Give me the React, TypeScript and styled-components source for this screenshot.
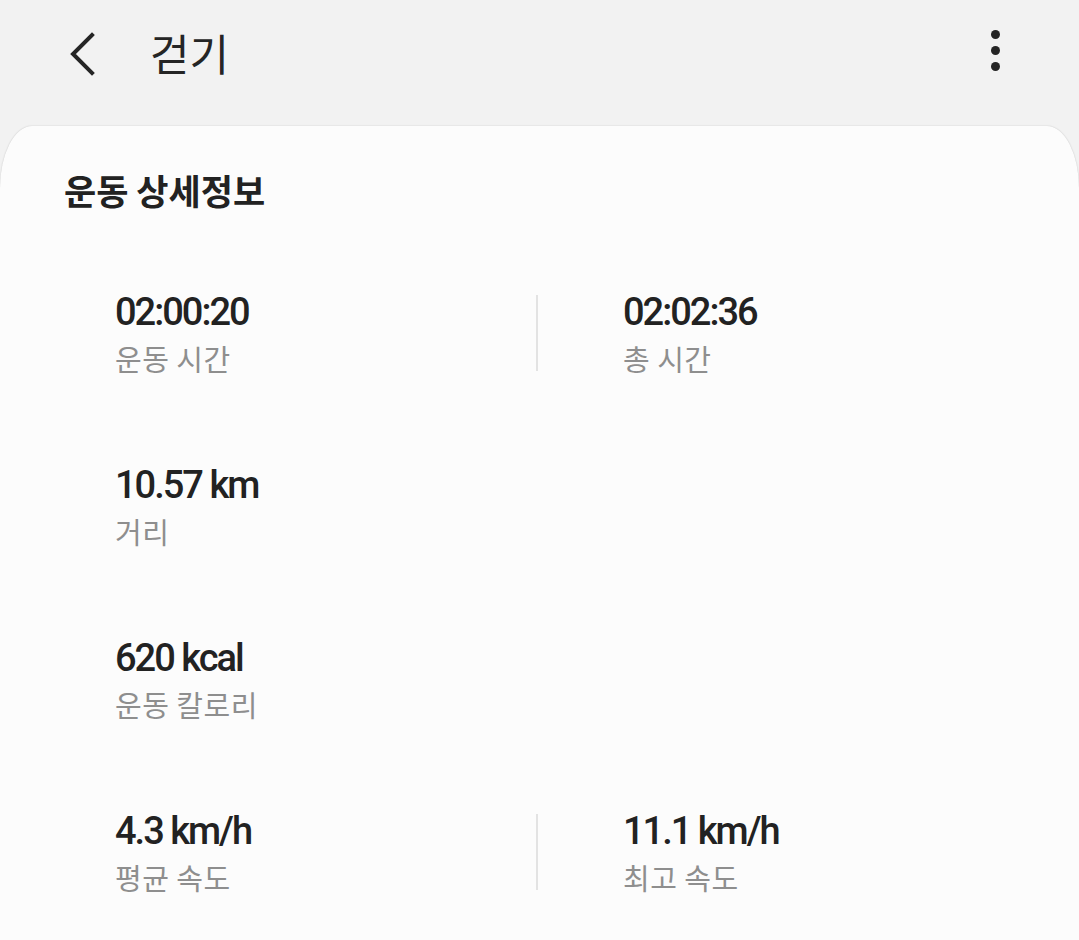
import styled, { createGlobalStyle } from "styled-components";

const GlobalStyle = createGlobalStyle`
  html, body {
    margin: 0;
    padding: 0;
    background: #f2f2f2;
  }
  body {
    font-family: "Noto Sans CJK KR", Roboto, sans-serif;
    overflow: hidden;
  }
`;

type Stat = { value: string; label: string };

// 운동 기록 한 줄에 1~2개
const rows: Stat[][] = [
  [
    { value: "02:00:20", label: "운동 시간" },
    { value: "02:02:36", label: "총 시간" },
  ],
  [{ value: "10.57 km", label: "거리" }],
  [{ value: "620 kcal", label: "운동 칼로리" }],
  [
    { value: "4.3 km/h", label: "평균 속도" },
    { value: "11.1 km/h", label: "최고 속도" },
  ],
];

export default function App() {
  return (
    <Page>
      <GlobalStyle />
      <Header>
        <BackButton aria-label="back">
          <svg width="30" height="46" viewBox="0 0 30 46">
            <polyline
              points="26,3 7,22 26,41"
              fill="none"
              stroke="#252525"
              strokeWidth="4"
              strokeLinecap="square"
              strokeLinejoin="miter"
            />
          </svg>
        </BackButton>
        <Title>걷기</Title>
        <MoreButton aria-label="more">
          <Dot />
          <Dot />
          <Dot />
        </MoreButton>
      </Header>

      <Card>
        <Heading>운동 상세정보</Heading>
        <StatList>
          {rows.map((row, i) => (
            <StatRow key={i}>
              <StatCell>
                <Value>{row[0].value}</Value>
                <Label>{row[0].label}</Label>
              </StatCell>
              {row[1] && (
                <>
                  <Divider />
                  <StatCell>
                    <Value>{row[1].value}</Value>
                    <Label>{row[1].label}</Label>
                  </StatCell>
                </>
              )}
            </StatRow>
          ))}
        </StatList>
      </Card>
    </Page>
  );
}

const Page = styled.div`
  display: flex;
  flex-direction: column;
  width: 1079px;
  height: 940px;
  background: #f2f2f2;
`;

const Header = styled.header`
  display: flex;
  align-items: center;
  height: 126px;
  padding: 0 74px 22px 66px;
  box-sizing: border-box;
`;

const BackButton = styled.div`
  display: flex;
  align-items: center;
  width: 30px;
  height: 46px;
  margin-top: 6px;
`;

const Title = styled.h1`
  flex: 1;
  margin: 0 0 0 54px;
  font-size: 43px;
  font-weight: 400;
  line-height: 56px;
  color: #252525;
`;

const MoreButton = styled.div`
  display: flex;
  flex-direction: column;
  align-items: center;
  gap: 7px;
  width: 20px;
  margin-top: -4px;
`;

const Dot = styled.span`
  width: 9px;
  height: 9px;
  border-radius: 50%;
  background: #252525;
`;

const Card = styled.main`
  flex: 1;
  background: #fcfcfc;
  border-radius: 32px 32px 0 0 / 62px 62px 0 0;
  box-shadow: 0 0 1.5px rgba(0, 0, 0, 0.22);
  padding: 42px 0 0 64px;
`;

const Heading = styled.h2`
  margin: 0;
  font-size: 35px;
  font-weight: 700;
  line-height: 44px;
  color: #222222;
`;

const StatList = styled.div`
  display: flex;
  flex-direction: column;
  gap: 87px;
  margin-top: 78px;
  padding-left: 51px;
`;

const StatRow = styled.div`
  display: grid;
  grid-template-columns: 421px 2px 1fr;
`;

const StatCell = styled.div`
  display: flex;
  flex-direction: column;
  &:last-child:not(:first-child) {
    padding-left: 85px;
  }
`;

const Value = styled.div`
  font-family: Roboto, "Noto Sans CJK KR", sans-serif;
  font-size: 38px;
  font-weight: 500;
  line-height: 44px;
  letter-spacing: -2px;
  color: #222222;
`;

const Label = styled.div`
  margin-top: 6px;
  font-size: 29px;
  font-weight: 400;
  line-height: 36px;
  letter-spacing: 0.5px;
  color: #8e8e8e;
`;

const Divider = styled.div`
  width: 2px;
  height: 76px;
  margin-top: 5px;
  background: #e3e3e3;
`;
